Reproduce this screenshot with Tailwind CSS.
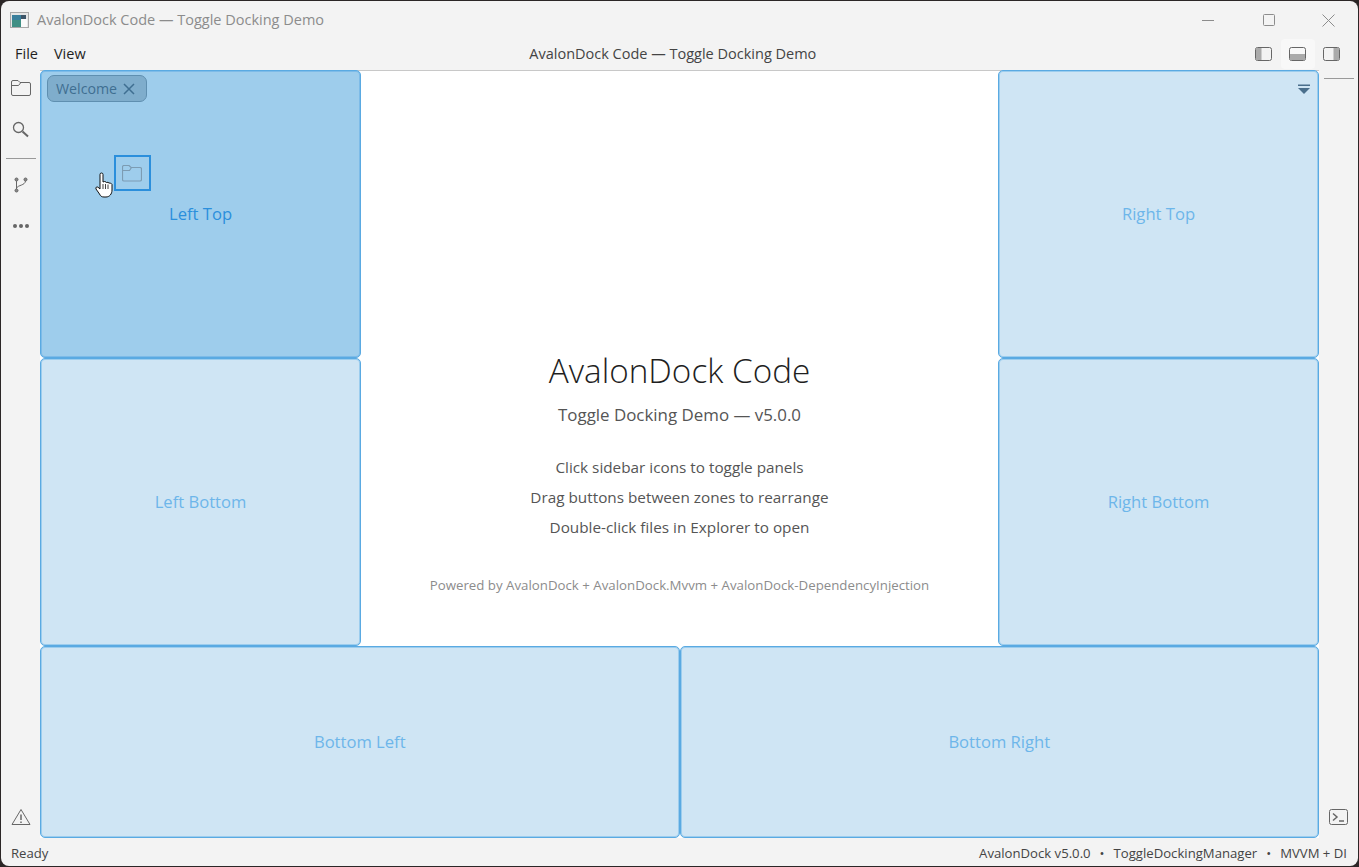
<!DOCTYPE html>
<html lang="en">
<head>
<meta charset="UTF-8">
<script src="https://cdn.jsdelivr.net/npm/@tailwindcss/browser@4"></script>
<title>AvalonDock Code — Toggle Docking Demo</title>
</head>
<body class="bg-[#2b2626] font-['Open_Sans',sans-serif] overflow-hidden">
<div class="relative w-[1359px] h-[867px] p-px">
<div class="flex flex-col w-full h-full bg-[#f3f3f3] rounded-t-[8px] rounded-b-[8px] overflow-hidden text-[#1f1f1f]">

    <!-- title bar -->
    <div class="flex items-center h-[38px] shrink-0">
        <svg class="ml-[9px] mr-[8px]" width="19" height="17" viewBox="0 0 19 17">
            <rect x=".5" y=".5" width="18" height="15" fill="#e6e6e6" stroke="#a8a8a8"/>
            <rect x="2" y="3" width="9" height="12" fill="#3f8f84"/>
            <rect x="2" y="3" width="9" height="5" fill="#3a7f9c"/>
            <rect x="11" y="3" width="5" height="4" fill="#3d5568"/>
            <rect x="11" y="7" width="6" height="8" fill="#fafafa"/>
        </svg>
        <span class="text-[14.5px] text-[#8c8c8c]">AvalonDock Code — Toggle Docking Demo</span>
        <div class="ml-auto flex items-center">
            <div class="w-[60px] flex justify-center"><svg width="12" height="12"><path d="M0 6.500H12" stroke="#8c8c8c"/></svg></div>
            <div class="w-[60px] flex justify-center pl-[2px]"><svg width="12" height="12"><rect x=".5" y=".5" width="11" height="11" rx="1" fill="none" stroke="#8c8c8c"/></svg></div>
            <div class="w-[60px] flex justify-center"><svg width="13" height="13"><path d="M.5 .5L12.500 12.500M12.500 .5L.5 12.500" stroke="#8c8c8c"/></svg></div>
        </div>
    </div>

    <!-- menu row -->
    <div class="flex items-center h-[31px] pb-px shrink-0">
        <span class="ml-[14px] text-[14.5px]">File</span>
        <span class="ml-[16px] text-[14.5px]">View</span>
        <span class="flex-1 text-center text-[14.5px] text-[#444] pl-[13px]">AvalonDock Code — Toggle Docking Demo</span>
        <div class="flex items-center mr-[9px]">
            <div class="w-[34px] h-[30px] flex items-center justify-center">
                <svg width="18" height="16"><rect x=".5" y="1.500" width="16" height="13" rx="2" fill="none" stroke="#666"/><rect x="1" y="2" width="5.500" height="12" fill="#aaa"/></svg>
            </div>
            <div class="w-[34px] h-[30px] flex items-center justify-center bg-[#f8f8f8] rounded">
                <svg width="18" height="16"><rect x=".5" y="1.500" width="16" height="13" rx="2" fill="none" stroke="#666"/><rect x="1" y="8" width="15" height="6" fill="#aaa"/></svg>
            </div>
            <div class="w-[34px] h-[30px] flex items-center justify-center">
                <svg width="18" height="16"><rect x=".5" y="1.500" width="16" height="13" rx="2" fill="none" stroke="#666"/><rect x="10.500" y="2" width="5.500" height="12" fill="#aaa"/></svg>
            </div>
        </div>
    </div>

    <!-- body -->
    <div class="flex flex-1 min-h-0">
        <!-- left sidebar -->
        <div class="w-[39px] shrink-0 flex flex-col items-center">
            <svg class="mt-[9px]" width="20" height="18" viewBox="0 0 20 18" fill="none" stroke="#666"><path d="M.5 15V3a1.500 1.500 0 0 1 1.500-1.500h5l2 2h9a1.500 1.500 0 0 1 1.500 1.500v10a1.500 1.500 0 0 1-1.500 1.500H2A1.500 1.500 0 0 1 .5 15zM.5 6.500h7l2-2.500"/></svg>
            <svg class="mt-[24px]" width="18" height="17" viewBox="0 0 18 17" fill="none" stroke="#666"><circle cx="6.500" cy="6.500" r="5" stroke-width="1.300"/><path d="M10.500 10.500L16 15.500" stroke-width="2"/></svg>
            <div class="mt-[20px] w-[30px] h-px bg-[#999]"></div>
            <svg class="mt-[18px]" width="14" height="16" viewBox="0 0 14 16" fill="none" stroke="#666"><circle cx="2.500" cy="2.500" r="1.500" fill="#888"/><circle cx="2.500" cy="13.500" r="1.500" fill="#888"/><circle cx="11.500" cy="2.500" r="1.500" fill="#888"/><path d="M2.500 4v8M2.500 11C4 8 11 8.500 11.500 4"/></svg>
            <div class="mt-[31px] flex gap-[2px]">
                <span class="w-[4px] h-[4px] rounded-full bg-[#666]"></span><span class="w-[4px] h-[4px] rounded-full bg-[#666]"></span><span class="w-[4px] h-[4px] rounded-full bg-[#666]"></span>
            </div>
            <svg class="mt-auto mb-[12px]" width="20" height="18" viewBox="0 0 20 18" fill="none" stroke="#666" stroke-linejoin="round"><path d="M10 1.500L19 16.500H1z"/><path d="M10 6.500v5.500M10 13.500v1.500" stroke-width="1.500"/></svg>
        </div>

        <!-- dock area -->
        <div class="relative flex-1 min-w-0 bg-white shadow-[inset_0_1px_0_#c8c8c8] grid grid-cols-[321px_637px_321px] grid-rows-[288px_288px_192px]">
            <div class="col-start-2 row-start-1 row-span-2 flex flex-col items-center pt-[279px] text-[#555]">
                <h1 class="text-[33.3px] font-light leading-[42px] text-[#1f1f1f]">AvalonDock Code</h1>
                <p class="mt-[13px] text-[16.9px] leading-[22px]">Toggle Docking Demo — v5.0.0</p>
                <p class="mt-[26px] text-[15.3px] leading-[30px]">Click sidebar icons to toggle panels</p>
                <p class="text-[15.3px] leading-[30px]">Drag buttons between zones to rearrange</p>
                <p class="text-[15.3px] leading-[30px]">Double-click files in Explorer to open</p>
                <p class="mt-[34px] text-[13.27px] leading-[18px] text-[#8c8c8c]">Powered by AvalonDock + AvalonDock.Mvvm + AvalonDock-DependencyInjection</p>
            </div>

            <div class="relative col-start-1 row-start-1 flex items-center justify-center pt-px bg-[#9ecdec] border border-[#5aaae2] shadow-[inset_0_0_0_1px_#7dbbe8] rounded-[5px] text-[16.6px] text-[#2b8fdc]">
                Left Top
                <div class="absolute left-[6px] top-[4px] h-[27px] w-[100px] flex items-center pl-[8px] gap-[6px] bg-[#7fadcc] border border-[#5f8fb0] rounded-[7px] text-[14.2px] text-[#3f6f92]">
                    Welcome
                    <svg width="12" height="12"><path d="M1 1L11 11M11 1L1 11" stroke="#3f6f92" stroke-width="1.500"/></svg>
                </div>
            </div>
            <div class="col-start-1 row-start-2 flex items-center justify-center pt-px bg-[#cfe5f4] border border-[#5aaae2] shadow-[inset_0_0_0_1px_#9ccdee] rounded-[5px] text-[16.6px] text-[#6db6ea]">Left Bottom</div>

            <div class="relative col-start-3 row-start-1 flex items-center justify-center pt-px bg-[#cfe5f4] border border-[#5aaae2] shadow-[inset_0_0_0_1px_#9ccdee] rounded-[5px] text-[16.6px] text-[#6db6ea]">
                Right Top
                <svg class="absolute right-[8px] top-[13px]" width="12" height="10"><path d="M0 .5H12V2H0z" fill="#4a6f8c"/><path d="M0 4H12L6 10z" fill="#4a6f8c"/></svg>
            </div>
            <div class="col-start-3 row-start-2 flex items-center justify-center pt-px bg-[#cfe5f4] border border-[#5aaae2] shadow-[inset_0_0_0_1px_#9ccdee] rounded-[5px] text-[16.6px] text-[#6db6ea]">Right Bottom</div>

            <div class="col-span-3 row-start-3 grid grid-cols-2">
                <div class="flex items-center justify-center pt-px bg-[#cfe5f4] border border-[#5aaae2] shadow-[inset_0_0_0_1px_#9ccdee] rounded-[5px] text-[16.6px] text-[#6db6ea]">Bottom Left</div>
                <div class="flex items-center justify-center pt-px bg-[#cfe5f4] border border-[#5aaae2] shadow-[inset_0_0_0_1px_#9ccdee] rounded-[5px] text-[16.6px] text-[#6db6ea]">Bottom Right</div>
            </div>

            <!-- drag ghost and cursor -->
            <div class="absolute left-[74px] top-[85px] w-[37px] h-[36px] flex items-center justify-center border-2 border-[#2b8fdc] pr-px">
                <svg width="20" height="17" viewBox="0 0 20 17" fill="none" stroke="#7c9cb3" stroke-width="1.200"><path d="M.5 14.500V2A1.500 1.500 0 0 1 2 .5h5l2 2h9A1.500 1.500 0 0 1 19.500 4v10.500A1.500 1.500 0 0 1 18 16H2A1.500 1.500 0 0 1 .5 14.500zM.5 5.500h7l2-3"/></svg>
            </div>
            <svg class="absolute left-[55px] top-[102px]" width="19" height="26" viewBox="0 0 19 26"><path d="M5 2.500a1.500 1.500 0 0 1 3 0V10l1.500-.5 1.500.5.5 .5 1.500-.2 1 .8 1.500-.1 1.500 1.500V18c0 4-2.500 7-6 7H9c-2.500 0-3.500-1-4.500-3L1 17c-.7-1.500.8-2.700 2-1.800L5 17z" fill="#fff" stroke="#111"/><path d="M8 12v5M10.500 12v5M13 12.500v4.500" stroke="#111" stroke-width=".8"/></svg>
        </div>

        <!-- right sidebar -->
        <div class="w-[39px] shrink-0 flex flex-col items-center">
            <div class="mt-[8px] w-[30px] h-px bg-[#999]"></div>
            <svg class="mt-auto mb-[12px]" width="20" height="17" viewBox="0 0 20 17" fill="none" stroke="#666"><rect x=".5" y=".5" width="18" height="15" rx="2"/><path d="M4 4.500L8 8l-4 3.500" stroke-width="1.500"/><path d="M10 12h5" stroke-width="1.500"/></svg>
        </div>
    </div>

    <!-- status bar -->
    <div class="flex items-center justify-between h-[28px] shrink-0 pt-[4px] pl-[10px] pr-[11px] text-[13.15px] text-[#444]">
        <span>Ready</span>
        <span class="flex gap-[9px]">
            <span>AvalonDock v5.0.0</span><span>•</span><span>ToggleDockingManager</span><span>•</span><span>MVVM + DI</span>
        </span>
    </div>
</div>
</div>
</body>
</html>
